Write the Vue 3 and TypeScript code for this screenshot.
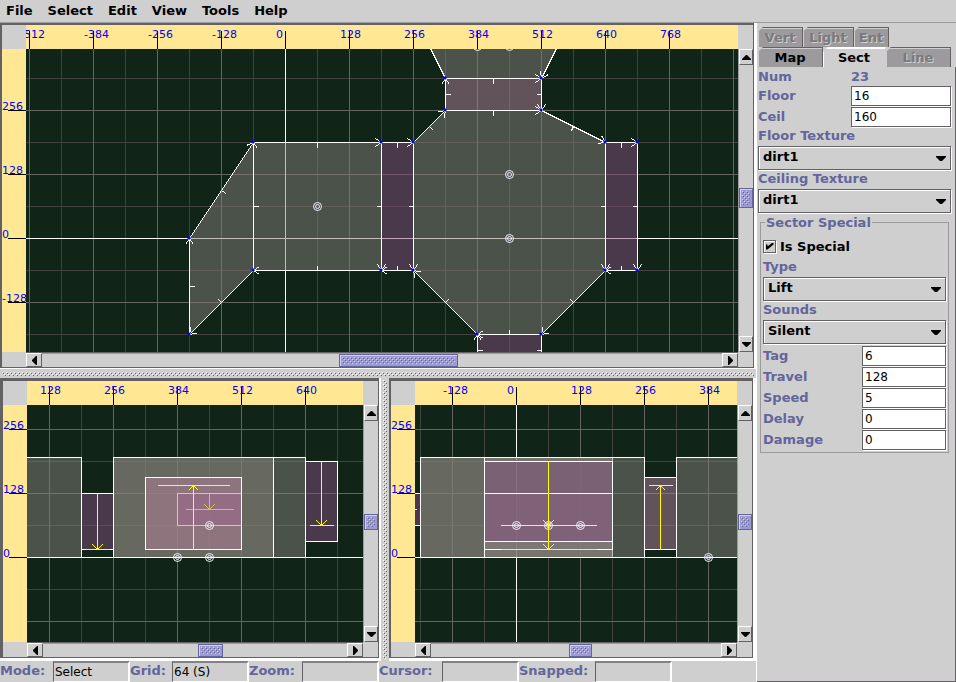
<script setup lang="ts">
import { ref } from 'vue'

type Kind = 'room' | 'door' | 'lift' | 'outline'

interface Sector { kind: Kind; points: number[][] }
interface Mover { x: number; from: number; to: number; half: number; after: number }
interface View {
  id: string
  originX: number
  originY: number
  minX: number
  maxX: number
  minY: number
  sectors: Sector[]
  movers: Mover[]
  things: number[][]
  lines: number[][]
  vertices: number[][]
  h: number[]
  v: number[]
}

const SCALE = 2
const px = (n: number): number => Math.round(n / SCALE)

const box = (kind: Kind, x1: number, x2: number, z1: number, z2: number): Sector => ({
  kind,
  points: [[x1, z1], [x1, z2], [x2, z2], [x2, z1]],
})

const plan: View = {
  id: 'top',
  originX: 259,
  originY: 189,
  minX: -512,
  maxX: 768,
  minY: -128,
  sectors: [
    { kind: 'room', points: [[-64, 192], [-192, 0], [-192, -192], [-64, -64]] },
    { kind: 'room', points: [[-64, 192], [192, 192], [192, -64], [-64, -64]] },
    { kind: 'door', points: [[192, 192], [256, 192], [256, -64], [192, -64]] },
    { kind: 'room', points: [[256, 192], [320, 256], [512, 256], [640, 192], [640, -64], [512, -192], [384, -192], [256, -64]] },
    { kind: 'lift', points: [[320, 256], [320, 320], [512, 320], [512, 256]] },
    { kind: 'room', points: [[320, 320], [256, 448], [576, 448], [512, 320]] },
    { kind: 'door', points: [[640, 192], [704, 192], [704, -64], [640, -64]] },
    { kind: 'door', points: [[384, -192], [512, -192], [512, -256], [384, -256]] },
  ],
  movers: [],
  things: [[64, 64], [448, 128], [448, 0], [384, 384], [448, 384]],
  lines: [
    [-192, 0, -64, 192], [-64, -64, -64, 192], [-192, -192, -192, 0], [-64, -64, -192, -192],
    [192, -64, -64, -64], [-64, 192, 192, 192], [192, 192, 256, 192], [256, 192, 320, 256],
    [320, 256, 320, 320], [320, 320, 512, 320], [512, 320, 512, 256], [320, 256, 512, 256],
    [512, 256, 640, 192], [640, 192, 704, 192], [704, 192, 704, -64], [704, -64, 640, -64],
    [640, 192, 640, -64], [640, -64, 512, -192], [512, -192, 384, -192], [384, -192, 256, -64],
    [256, -64, 192, -64], [256, 192, 256, -64], [192, 192, 192, -64],
    [384, -256, 384, -192], [512, -192, 512, -256], [320, 320, 256, 448], [576, 448, 512, 320],
  ],
  vertices: [
    [-64, 192], [-192, 0], [-192, -192], [-64, -64], [192, 192], [256, 192], [320, 256], [320, 320],
    [512, 320], [512, 256], [640, 192], [704, 192], [192, -64], [256, -64], [384, -192], [512, -192],
    [640, -64], [704, -64],
  ],
  h: [298, 119, 264],
  v: [123, 20, 129],
}

const front: View = {
  id: 'front',
  originX: -42,
  originY: 152,
  minX: 128,
  maxX: 640,
  minY: 0,
  sectors: [
    box('room', -64, 192, 0, 200),
    box('door', 192, 256, 16, 128),
    box('room', 256, 576, 0, 200),
    box('room', 256, 640, 0, 200),
    box('door', 384, 512, 64, 128),
    box('lift', 320, 512, 16, 160),
    box('door', 640, 704, 32, 192),
    box('outline', 256, 576, 0, 200),
  ],
  movers: [
    { x: 224, from: 128, to: 16, half: 24, after: 1 },
    { x: 448, from: 128, to: 96, half: 48, after: 4 },
    { x: 416, from: 16, to: 144, half: 72, after: 5 },
    { x: 672, from: 192, to: 64, half: 24, after: 6 },
  ],
  things: [[448, 64], [384, 0], [448, 0]],
  lines: [],
  vertices: [],
  h: [155, 25, 124],
  v: [93, 16, 96],
}

const side: View = {
  id: 'side',
  originX: 101,
  originY: 152,
  minX: -128,
  maxX: 384,
  minY: 0,
  sectors: [
    box('door', -320, -192, 64, 128),
    box('door', -64, 192, 16, 128),
    box('room', -192, 192, 0, 200),
    box('room', -192, 192, 0, 200),
    box('room', -64, 256, 0, 200),
    box('door', -64, 192, 32, 192),
    box('outline', -64, 192, 16, 128),
    box('lift', 256, 320, 16, 160),
    box('room', 320, 640, 0, 200),
  ],
  movers: [
    { x: -256, from: 128, to: 96, half: 56, after: 0 },
    { x: 64, from: 192, to: 64, half: 96, after: 6 },
    { x: 64, from: 128, to: 16, half: 96, after: 6 },
    { x: 288, from: 16, to: 144, half: 24, after: 7 },
  ],
  things: [[0, 64], [64, 64], [128, 64], [384, 0]],
  lines: [],
  vertices: [],
  h: [138, 23, 129],
  v: [93, 16, 96],
}

const views: View[] = [plan, front, side]

const steps = (from: number, to: number, by: number): number[] => {
  const out: number[] = []
  for (let n = from; n <= to; n += by) out.push(n)
  return out
}
const gridSteps = steps(-2048, 4096, 64).sort((a, b) => Number(a % 128 === 0) - Number(b % 128 === 0))
const gridClass = (n: number): string => (n === 0 ? 'axis' : n % 128 === 0 ? 'major' : 'minor')

const polygon = (s: Sector): string => s.points.map(([x, y]) => `${px(x)},${-px(y)}`).join(' ')

// A map line, an arrow head at its end, and a tick on its front side.
const linePath = ([a, b, c, d]: number[]): string => {
  const x1 = px(a), y1 = -px(b), x2 = px(c), y2 = -px(d)
  const len = Math.hypot(x2 - x1, y2 - y1)
  const ux = (x2 - x1) / len, uy = (y2 - y1) / len
  const mx = (x1 + x2) / 2, my = (y1 + y2) / 2
  const wing = (s: number): string =>
    `M${x2} ${y2}l${(-6 * ux - s * 4 * uy).toFixed(1)} ${(-6 * uy + s * 4 * ux).toFixed(1)}`
  return `M${x1} ${y1}L${x2} ${y2}${wing(1)}${wing(-1)}M${mx} ${my}l${(-5 * uy).toFixed(1)} ${(5 * ux).toFixed(1)}`
}

const moverPath = (m: Mover): string => {
  const x = px(m.x), y1 = -px(m.from), y2 = -px(m.to)
  const back = y2 > y1 ? -5 : 5
  return `M${x} ${y1}V${y2}M${x - px(m.half)} ${y2}H${x + px(m.half)}M${x - 5} ${y2 + back}L${x} ${y2}L${x + 5} ${y2 + back}`
}

const menus = ['File', 'Select', 'Edit', 'View', 'Tools', 'Help']
const status = [
  { label: 'Mode:', value: 'Select' },
  { label: 'Grid:', value: '64 (S)' },
  { label: 'Zoom:', value: '' },
  { label: 'Cursor:', value: '' },
  { label: 'Snapped:', value: '' },
]

const floor = ref('16')
const ceil = ref('160')
const special = ref(true)
const numbers = ref([
  { label: 'Tag', value: '6' },
  { label: 'Travel', value: '128' },
  { label: 'Speed', value: '5' },
  { label: 'Delay', value: '0' },
  { label: 'Damage', value: '0' },
])
const textures = [
  { id: 'floor-tex', label: 'Floor Texture', value: 'dirt1' },
  { id: 'ceil-tex', label: 'Ceiling Texture', value: 'dirt1' },
]
const specials = [
  { id: 'type', label: 'Type', value: 'Lift' },
  { id: 'sounds', label: 'Sounds', value: 'Silent' },
]
</script>

<template>
  <div class="app">
    <svg class="defs" width="0" height="0" aria-hidden="true">
      <defs>
        <pattern id="grip" width="4" height="4" patternUnits="userSpaceOnUse">
          <rect x="0" y="0" width="1" height="1" fill="#fff" /><rect x="2" y="2" width="1" height="1" fill="#fff" />
          <rect x="1" y="1" width="1" height="1" fill="#636163" /><rect x="3" y="3" width="1" height="1" fill="#636163" />
        </pattern>
        <pattern id="knob" width="4" height="4" patternUnits="userSpaceOnUse">
          <rect x="0" y="0" width="1" height="1" fill="#ceceff" /><rect x="2" y="2" width="1" height="1" fill="#ceceff" />
          <rect x="1" y="1" width="1" height="1" fill="#63659c" /><rect x="3" y="3" width="1" height="1" fill="#63659c" />
        </pattern>
      </defs>
    </svg>

    <nav class="menubar">
      <button v-for="m in menus" :key="m" type="button">{{ m }}</button>
    </nav>

    <main class="work">
      <div class="split">
        <section v-for="view in views" :key="view.id" class="pane" :class="view.id">
          <div class="blank"></div>
          <svg class="ruler">
            <g :transform="`translate(${view.originX} 0)`">
              <template v-for="n in steps(view.minX, view.maxX, 128)" :key="n">
                <rect class="tick" :x="px(n)" y="6" width="1" height="18" />
                <text :x="px(n) - 9" y="13">{{ n }}</text>
              </template>
            </g>
          </svg>
          <div class="blank"></div>
          <svg class="ruler">
            <g :transform="`translate(0 ${view.originY})`">
              <template v-for="n in steps(view.minY, 256, 128)" :key="n">
                <rect class="tick" x="6" :y="-px(n)" width="18" height="1" />
                <text x="0" :y="-px(n)">{{ n }}</text>
              </template>
            </g>
          </svg>
          <svg class="canvas">
            <g :transform="`translate(${view.originX} ${view.originY})`">
              <template v-for="n in gridSteps" :key="n">
                <rect :class="gridClass(n)" :x="px(n)" y="-1000" width="1" height="3000" />
                <rect :class="gridClass(n)" x="-1000" :y="-px(n)" width="4000" height="1" />
              </template>
              <rect class="axis" x="0" y="-1000" width="1" height="3000" />
              <rect class="axis" x="-1000" y="0" width="4000" height="1" />
            </g>
            <g :transform="`translate(${view.originX + 0.5} ${view.originY + 0.5})`">
              <template v-for="(s, i) in view.sectors" :key="i">
                <polygon :class="[s.kind, { edged: view.id !== 'top' }]" :points="polygon(s)" />
                <template v-for="(m, j) in view.movers" :key="j">
                  <path v-if="m.after === i" class="mover" :d="moverPath(m)" />
                </template>
              </template>
              <path v-for="(l, i) in view.lines" :key="i" class="line" :d="linePath(l)" />
              <rect
                v-for="(p, i) in view.vertices" :key="i" class="vertex"
                :x="px(p[0]) - 2" :y="-px(p[1]) - 2" width="3" height="3" rx="1"
              />
              <g v-for="(t, i) in view.things" :key="i" class="thing">
                <circle :cx="px(t[0])" :cy="-px(t[1])" r="4" />
                <circle :cx="px(t[0])" :cy="-px(t[1])" r="2" />
              </g>
            </g>
          </svg>
          <div class="scroll vertical">
            <button type="button" aria-label="Up"><svg width="9" height="5"><path d="M4 0h1l4 4v1H0V4z" /></svg></button>
            <div class="track">
              <span :style="{ flexGrow: view.v[0] }"></span>
              <div class="knob" :style="{ height: view.v[1] + 'px' }"><svg><rect width="100%" height="100%" fill="url(#knob)" /></svg></div>
              <span :style="{ flexGrow: view.v[2] }"></span>
            </div>
            <button type="button" aria-label="Down"><svg width="9" height="5"><path d="M0 0h9v1L5 5H4L0 1z" /></svg></button>
          </div>
          <div class="blank"></div>
          <div class="scroll horizontal">
            <button type="button" aria-label="Left"><svg width="5" height="9"><path d="M5 0v9H4L0 5V4l4-4z" /></svg></button>
            <div class="track">
              <span :style="{ flexGrow: view.h[0] }"></span>
              <div class="knob" :style="{ width: view.h[1] + 'px' }"><svg><rect width="100%" height="100%" fill="url(#knob)" /></svg></div>
              <span :style="{ flexGrow: view.h[2] }"></span>
            </div>
            <button type="button" aria-label="Right"><svg width="5" height="9"><path d="M0 0v9h1l4-4V4L1 0z" /></svg></button>
          </div>
          <div class="blank"></div>
        </section>
        <div class="divider across"><svg><rect width="100%" height="100%" fill="url(#grip)" /></svg></div>
        <div class="divider upright"><svg><rect width="100%" height="100%" fill="url(#grip)" /></svg></div>
      </div>

      <footer class="status">
        <template v-for="s in status" :key="s.label">
          <span class="name">{{ s.label }}</span>
          <output>{{ s.value }}</output>
        </template>
      </footer>
    </main>

    <aside class="side">
      <div class="tabs back">
        <button type="button" class="tab" disabled>Vert</button>
        <button type="button" class="tab" disabled>Light</button>
        <button type="button" class="tab" disabled>Ent</button>
      </div>
      <div class="tabs fore">
        <button type="button" class="tab">Map</button>
        <button type="button" class="tab current">Sect</button>
        <button type="button" class="tab" disabled>Line</button>
      </div>
      <form class="panel" @submit.prevent>
        <div class="row"><span>Num</span><output>23</output></div>
        <div class="row field"><label for="floor">Floor</label><input id="floor" v-model="floor" type="text"></div>
        <div class="row field"><label for="ceil">Ceil</label><input id="ceil" v-model="ceil" type="text"></div>
        <template v-for="t in textures" :key="t.id">
          <label class="caption" :for="t.id">{{ t.label }}</label>
          <div class="combo">
            <select :id="t.id"><option>{{ t.value }}</option></select>
            <svg width="10" height="5"><path d="M0 0h10v1L6 5H4L0 1z" /></svg>
          </div>
        </template>
        <fieldset>
          <legend>Sector Special</legend>
          <label class="check"><input v-model="special" type="checkbox"><span>Is Special</span></label>
          <template v-for="t in specials" :key="t.id">
            <label class="caption" :for="t.id">{{ t.label }}</label>
            <div class="combo">
              <select :id="t.id"><option>{{ t.value }}</option></select>
              <svg width="10" height="5"><path d="M0 0h10v1L6 5H4L0 1z" /></svg>
            </div>
          </template>
          <div class="numbers">
            <div v-for="n in numbers" :key="n.label" class="row field inner">
              <label :for="n.label">{{ n.label }}</label><input :id="n.label" v-model="n.value" type="text">
            </div>
          </div>
        </fieldset>
      </form>
    </aside>
  </div>
</template>

<style>
body { background: #cecfce; }
</style>

<style scoped>
* { box-sizing: border-box; }
.app {
  display: grid;
  grid-template: 23px minmax(0, 1fr) / minmax(0, 1fr) 200px;
  height: 100vh;
  background: #cecfce;
  color: #000;
  font: bold 13px/19px "DejaVu Sans", sans-serif;
}
button, input, select, output { font: inherit; color: inherit; border-radius: 0; }
button { border: 0; padding: 0; background: none; }
svg { display: block; }
.defs { position: absolute; }

.menubar {
  grid-column: 1 / -1;
  display: flex;
  gap: 15px;
  padding: 0 6px 2px;
  border-bottom: 1px solid #9c9a9c;
}

.work { display: flex; flex-direction: column; min-height: 0; }
.split {
  flex: 1;
  min-height: 0;
  display: grid;
  grid-template: minmax(0, 346fr) 9px minmax(0, 283fr) / minmax(0, 381fr) 8px minmax(0, 367fr);
  background: #fff;
}
.pane {
  display: grid;
  grid-template: 24px minmax(0, 1fr) 15px / 24px minmax(0, 1fr) 15px;
  min-width: 0;
  min-height: 0;
  border: solid #636163;
  background: #cecfce;
}
.pane.top { grid-area: 1 / 1 / 2 / 4; border-width: 2px 1px 1px 2px; margin: 0 2px 1px 0; }
.pane.front { grid-area: 3 / 1; border-width: 3px 1px 1px 3px; margin: 0 2px 3px 0; }
.pane.side { grid-area: 3 / 3; border-width: 3px 1px 1px 2px; margin: 0 3px 3px 0; }
.ruler { width: 100%; height: 100%; background: #ffe794; overflow: hidden; }
.ruler text { font: 11px "DejaVu Sans", sans-serif; fill: #00f; }
.tick { fill: #000; }
.canvas { width: 100%; height: 100%; background: #102418; overflow: hidden; shape-rendering: crispEdges; }
.minor { fill: #424142; }
.major { fill: #636563; }
.axis { fill: #fff; }
.room { fill: rgb(131 128 122 / 0.5); }
.door { fill: rgb(130 78 124 / 0.5); }
.lift { fill: rgb(180 128 154 / 0.5); }
.outline { fill: none; }
.edged { stroke: #fff; }
.line { fill: none; stroke: #fff; }
.mover { fill: none; stroke: #ff0; }
.vertex { fill: #00f; shape-rendering: geometricPrecision; }
.thing { fill: none; stroke: #f0f0ff; shape-rendering: geometricPrecision; }

.scroll { display: flex; background: #cecfce; min-width: 0; min-height: 0; }
.scroll.vertical { flex-direction: column; border-left: 1px solid #9c9a9c; }
.scroll.horizontal { border-top: 1px solid #636163; }
.scroll button {
  flex: none;
  display: grid;
  place-items: center;
  border: 1px solid;
  border-color: #fff #636163 #636163 #fff;
}
.vertical button { height: 16px; }
.horizontal button { width: 16px; }
.track { flex: 1; display: flex; min-width: 0; min-height: 0; }
.vertical .track { flex-direction: column; }
.horizontal .track { border-top: 1px solid #9c9a9c; }
.track span { flex-basis: 0; }
.knob {
  flex: none;
  padding: 2px;
  background: #9c9ace;
  border: 1px solid #63659c;
  box-shadow: inset 1px 1px #ceceff;
}
.knob svg { width: 100%; height: 100%; }
.divider { background: #cecfce; padding: 2px; }
.divider svg { width: 100%; height: 100%; }
.across { grid-area: 2 / 1 / 3 / 4; padding: 3px 2px 2px; }
.upright { grid-area: 3 / 2; }

.status {
  display: grid;
  grid-template-columns: 53px 77px 42px 77px 53px 77px 63px 77px 76px 77px;
  height: 21px;
}
.name { color: #63659c; white-space: nowrap; }
.status output {
  font-weight: normal;
  font-size: 12px;
  line-height: 18px;
  padding-left: 1px;
  border: 1px solid #fff;
  border-top: 2px solid #848284;
  border-left-color: #636163;
  border-right-width: 2px;
}

aside.side { min-width: 0; border-left: 1px solid #fff; padding-top: 4px; display: flex; flex-direction: column; }
.tabs { display: grid; height: 20px; padding: 0 5px 0 1px; }
.back { grid-template-columns: 45px 51px 35px; }
.fore { grid-template-columns: 65px 63px 65px; }
.tab {
  background: #9c9a9c;
  border: solid #636163;
  border-width: 1px 1px 0 0;
  box-shadow: inset 1px 1px #cecfce;
  clip-path: polygon(5px 0, 100% 0, 100% 100%, 0 100%, 0 5px);
  line-height: 17px;
}
.tab:disabled { color: #7b797b; text-shadow: 1px 1px #cecfce; }
.tab.current { background: #cecfce; border-color: #fff #cecfce; box-shadow: inset 1px 1px #fff; }
.panel {
  flex: 1;
  padding: 0 4px 0 1px;
  border: solid #636163;
  border-width: 0 1px 1px 0;
  color: #63659c;
}
.row { display: grid; grid-template-columns: minmax(0, 1fr) 100px; line-height: 19px; }
.field { height: 21px; }
.numbers { padding-top: 1px; }
.inner { grid-template-columns: minmax(0, 1fr) 84px; }
.field input {
  width: 100%;
  height: 20px;
  margin: 0;
  padding: 0 2px;
  background: #fff;
  color: #000;
  border: 1px solid #636163;
  box-shadow: 1px 1px #fff;
  font-weight: normal;
  font-size: 12px;
}
.caption { display: block; height: 18px; line-height: 16px; }
.combo { position: relative; height: 25px; }
.combo select {
  appearance: none;
  width: 100%;
  height: 24px;
  margin: 0;
  padding: 0 4px 3px;
  background: #cecfce;
  color: #000;
  border: 1px solid #636163;
  box-shadow: inset 1px 1px #fff, 1px 1px #fff;
}
.combo svg { position: absolute; right: 5px; top: 10px; pointer-events: none; }
fieldset { margin: 0 2px; padding: 4px 2px 1px; border: 1px solid #9c9a9c; min-width: 0; }
legend { padding: 0 1px; margin-left: 2px; line-height: 17px; }
.check { display: flex; align-items: center; gap: 4px; height: 24px; padding-bottom: 2px; color: #000; }
.check input {
  appearance: none;
  width: 13px;
  height: 13px;
  margin: 0;
  border: 1px solid #636163;
  box-shadow: inset 1px 1px #fff, 1px 1px #fff;
  display: grid;
  place-items: center;
}
.check input:checked::before {
  content: "";
  width: 8px;
  height: 7px;
  background: #000;
  clip-path: polygon(0 2px, 2px 2px, 2px 4px, 7px 0, 8px 0, 8px 2px, 2px 7px, 0 7px);
}
</style>
